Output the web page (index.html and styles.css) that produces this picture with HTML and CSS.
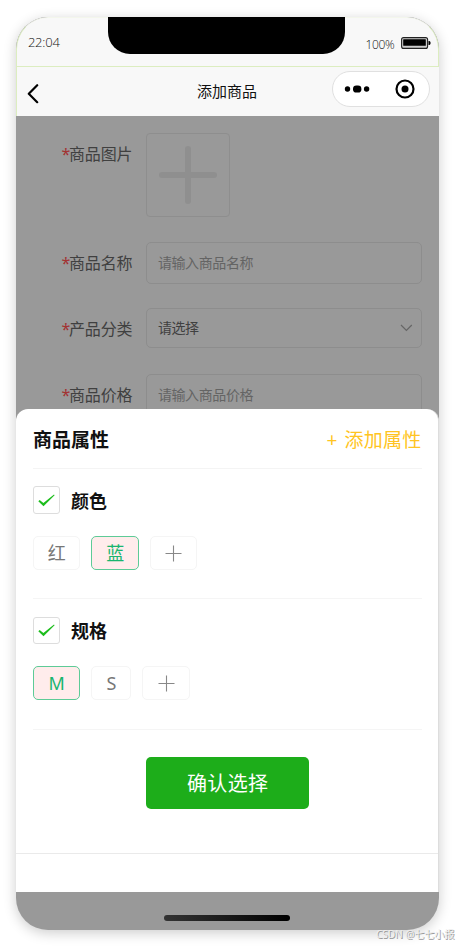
FILE: index.html
```html
<!DOCTYPE html>
<html lang="zh-CN">
<head>
<meta charset="utf-8">
<title>添加商品</title>
<link rel="stylesheet" href="styles.css">
</head>
<body>
<main class="phone">
  <header class="status">
    <span class="time">22:04</span>
    <div class="notch"></div>
    <div class="power"><span>100%</span>
      <svg width="30" height="12" viewBox="0 0 30 12"><rect x=".6" y=".6" width="26" height="10.8" rx="2" fill="#ccc" stroke="#222" stroke-width="1.1"/><rect x="2.2" y="2.2" width="22.6" height="6.6" rx=".5"/><path d="M27.5 4h1l1 1v2l-1 1h-1z"/></svg>
    </div>
  </header>
  <nav class="navbar">
    <svg class="back" width="12" height="20" viewBox="0 0 12 20"><path d="M10.2 1.2 1.8 9.8l8.4 8.4" fill="none" stroke="#000" stroke-width="2.2" stroke-linecap="round" stroke-linejoin="round"/></svg>
    <h1>添加商品</h1>
    <div class="capsule">
      <svg width="26" height="10" viewBox="0 0 26 10"><circle cx="3.5" cy="5" r="2.7"/><rect x="9" y="1.4" width="8.4" height="7.2" rx="3.4"/><circle cx="22.6" cy="5" r="2.7"/></svg>
      <svg width="20" height="20" viewBox="0 0 20 20"><circle cx="10" cy="10" r="8.5" fill="none" stroke="#000" stroke-width="2.2"/><circle cx="10" cy="10" r="3.5"/></svg>
    </div>
  </nav>
  <section class="form">
    <div class="row row-image"><label><i>*</i>商品图片</label>
      <div class="upload"><svg width="58" height="58" viewBox="0 0 58 58"><path d="M29 3v52M3 29h52" stroke="#8f8f8f" stroke-width="6" stroke-linecap="round"/></svg></div></div>
    <div class="row row-name"><label><i>*</i>商品名称</label><div class="field hint">请输入商品名称</div></div>
    <div class="row row-type"><label><i>*</i>产品分类</label><div class="field"><span>请选择</span><svg width="13" height="8" viewBox="0 0 13 8"><path d="m1 1 5.4 5.5L11.8 1" fill="none" stroke="#666" stroke-width="1.2"/></svg></div></div>
    <div class="row row-price"><label><i>*</i>商品价格</label><div class="field hint">请输入商品价格</div></div>
  </section>
  <section class="sheet">
    <div class="sheet-head"><h2>商品属性</h2><span class="add-attr"><b>+</b>添加属性</span></div>
    <div class="group">
      <div class="group-title"><span class="check"><svg width="17" height="13" viewBox="0 0 17 13"><path d="M.3 7.2 1.7 6l3.7 3L16 .4l.6.9L5.5 12.3z" fill="#1dbd1d"/></svg></span><h3>颜色</h3></div>
      <div class="tags"><span class="tag">红</span><span class="tag active">蓝</span><span class="tag"><svg width="17" height="17" viewBox="0 0 17 17"><path d="M8.5 .5v16M.5 8.5h16" stroke="#888" stroke-width="1.1"/></svg></span></div>
    </div>
    <div class="group">
      <div class="group-title"><span class="check"><svg width="17" height="13" viewBox="0 0 17 13"><path d="M.3 7.2 1.7 6l3.7 3L16 .4l.6.9L5.5 12.3z" fill="#1dbd1d"/></svg></span><h3>规格</h3></div>
      <div class="tags"><span class="tag active">M</span><span class="tag narrow">S</span><span class="tag"><svg width="17" height="17" viewBox="0 0 17 17"><path d="M8.5 .5v16M.5 8.5h16" stroke="#888" stroke-width="1.1"/></svg></span></div>
    </div>
    <div class="confirm-area"><button class="confirm">确认选择</button></div>
  </section>
  <footer class="home"><div class="home-bar"></div></footer>
</main>
<div class="watermark">CSDN @七七小报</div>
</body>
</html>
```

FILE: styles.css
```css
* { box-sizing: border-box; }
body {
  margin: 0;
  width: 457px;
  height: 946px;
  overflow: hidden;
  position: relative;
  background: #fff;
  padding: 17px 18px 0 16.4px;
  font-family: "Noto Sans", "Noto Sans CJK SC", sans-serif;
}
h1, h2, h3 { margin: 0; }
svg { display: block; flex: none; }
.phone {
  width: 422.2px;
  height: 913px;
  border-radius: 32px;
  overflow: hidden;
  background: #999;
  display: flex;
  flex-direction: column;
  box-shadow: 0 3px 13px rgba(0, 0, 0, .2);
}
.status {
  height: 50px;
  flex: none;
  background: #f8f8f8;
  border: 1px solid #dcedc0;
  border-radius: 32px 32px 0 0;
  border-top-color: #f3f6ec;
  display: grid;
  grid-template-columns: 91px 237px 1fr;
}
.time { font-family: "Open Sans", "Noto Sans", sans-serif; font-weight: 300; font-size: 13px; line-height: 18px; padding: 15px 0 0 10.5px; color: #111; letter-spacing: -.2px; }
.notch { height: 37px; margin-top: -1px; background: #000; border-radius: 0 0 22px 22px; }
.power { display: flex; align-items: flex-start; padding: 19px 0 0 20px; font-family: "Open Sans", "Noto Sans", sans-serif; font-weight: 300; font-size: 12px; line-height: 16px; color: #111; letter-spacing: -.3px; }
.power span { width: 35.5px; white-space: nowrap; }
.navbar {
  height: 49px;
  flex: none;
  background: #f8f8f8;
  border-left: 1px solid #dcedc0;
  display: grid;
  grid-template-columns: 150px 1fr 98px;
  align-items: center;
  padding: 0 8.6px 0 9.6px;
}
.back { margin-top: 4px; }
.navbar h1 { font-size: 15px; font-weight: 400; line-height: 22px; color: #111; padding-left: 20px; margin-top: -1px; }
.capsule {
  width: 98px;
  height: 36px;
  margin-top: -5px;
  border: 1px solid #e0e0e0;
  border-radius: 18px;
  background: #fff;
  display: flex;
  align-items: center;
  justify-content: space-between;
  padding: 0 14px 0 11px;
}
.form { height: 293px; flex: none; padding: 17px 17px 0 45px; color: #404040; overflow: hidden; }
.row { display: grid; grid-template-columns: 84.5px 1fr; align-items: center; }
.row label { font-size: 16px; line-height: 22px; white-space: nowrap; letter-spacing: -.1px; }
.row i { font-style: normal; color: #a33232; display: inline-block; width: 7.5px; }
.row-image { align-items: start; margin-bottom: 25px; }
.row-image label { padding-top: 10px; }
.upload { width: 84px; height: 84px; border: 1px solid #8e8e8e; border-radius: 4px; display: flex; align-items: center; justify-content: center; }
.field { height: 42px; border: 1px solid #8d8d8d; border-radius: 5px; padding: 0 8px 0 11px; display: flex; align-items: center; justify-content: space-between; font-size: 14px; line-height: 20px; letter-spacing: -.4px; }
.hint { color: #646464; }
.row-name { margin-bottom: 24px; }
.row-type { margin-bottom: 26px; }
.row-type .field { height: 40px; }
.row-type label { padding-top: 1px; }
.sheet { height: 483px; flex: none; background: #fff; border-radius: 12px 12px 0 0; border-right: 1px solid #ddd; }
.sheet-head { height: 60px; margin: 0 16px 0 16.6px; border-bottom: 1px solid #f4f4f4; display: flex; align-items: center; justify-content: space-between; padding-top: 2px; }
.sheet-head h2 { font-size: 19px; line-height: 28px; color: #111; }
.add-attr { font-size: 19px; line-height: 28px; color: #ffc422; display: flex; letter-spacing: .3px; }
.add-attr b { font-weight: 400; width: 18px; }
.group { height: 130.3px; margin: 0 16px 0 16.6px; border-bottom: 1px solid #f5f5f5; padding-top: 17px; }
.group-title { display: flex; align-items: center; gap: 10.5px; height: 28px; }
.check { width: 27.5px; height: 27.5px; border: 1px solid #ddd; border-radius: 3px; display: flex; align-items: center; justify-content: center; }
.group h3 { font-size: 18px; line-height: 26px; color: #111; padding-top: 1px; }
.tags { display: flex; gap: 11px; margin-top: 22px; }
.tag { width: 47.5px; height: 34px; border: 1px solid #f5f5f5; border-radius: 5px; display: flex; align-items: center; justify-content: center; font-size: 18px; line-height: 26px; color: #777; }
.tag.active { border-color: #5dcb97; background: #ffecec; color: #19b56f; }
.tag.narrow { width: 40px; }
.confirm-area { height: 124.4px; border-bottom: 1px solid #eaeaea; padding: 27.4px 0 0 129.5px; }
.confirm { display: block; width: 163.5px; height: 52px; padding: 3px 0 0; border: 0; border-radius: 5px; background: #1dad1a; color: #fff; font: inherit; font-size: 20px; line-height: 28px; letter-spacing: .3px; }
.home { flex: 1; padding: 23px 0 0 147.5px; }
.home-bar { width: 126px; height: 6px; border-radius: 3px; background: linear-gradient(90deg, #333, #000); }
.watermark { position: absolute; left: 376px; top: 926px; font-size: 10px; line-height: 16px; color: #eee; white-space: nowrap; text-shadow: 1px 1px 0 #999; letter-spacing: 0; }
```
